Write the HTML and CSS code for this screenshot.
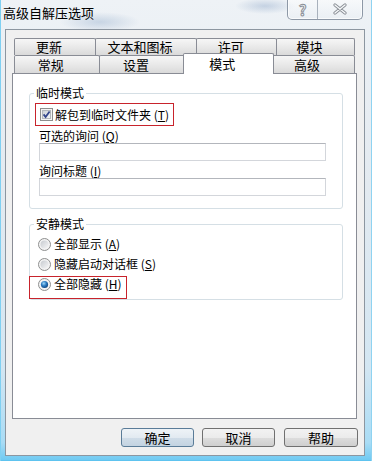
FILE: index.html
```html
<!DOCTYPE html>
<html>
<head>
  <meta charset="utf-8">
  <link rel="stylesheet" href="styles.css">
</head>
<body>
  <div class="window">
    <div class="titlebar">
      <span class="title">高级自解压选项</span>
      <div class="caption-btns">
        <span class="cap-btn cap-help">?</span>
        <span class="cap-btn cap-close">
          <svg width="16" height="12" viewBox="0 0 16 12">
            <path d="M3 2 L13 10 M13 2 L3 10" stroke="#8a8f96" stroke-width="3.2" stroke-linecap="round"/>
            <path d="M3 2 L13 10 M13 2 L3 10" stroke="#f7f9fb" stroke-width="1.4" stroke-linecap="round"/>
          </svg>
        </span>
      </div>
    </div>

    <div class="client">
      <div class="tabs">
        <div class="tab-row">
          <div class="tab tab-update">更新</div>
          <div class="tab tab-text">文本和图标</div>
          <div class="tab tab-license">许可</div>
          <div class="tab tab-module">模块</div>
        </div>
        <div class="tab-row">
          <div class="tab tab-general">常规</div>
          <div class="tab tab-setup">设置</div>
          <div class="tab tab-mode active">模式</div>
          <div class="tab tab-advanced">高级</div>
        </div>
      </div>

      <div class="panel">
        <fieldset class="group group-temp">
          <legend>临时模式</legend>
          <div class="check-row">
            <svg class="check" width="13" height="13" viewBox="0 0 13 13">
              <defs>
                <linearGradient id="chkfill" x1="0" y1="0" x2="1" y2="1">
                  <stop offset="0" stop-color="#cbcfd5"/>
                  <stop offset="1" stop-color="#f6f7f8"/>
                </linearGradient>
              </defs>
              <rect x="0.5" y="0.5" width="12" height="12" fill="#f4f4f4" stroke="#8e8f8f"/>
              <rect x="2.5" y="2.5" width="8" height="8" fill="url(#chkfill)" stroke="#b4b8bd"/>
              <path d="M3.6 6.4 L5.6 9 L9.6 3.4" fill="none" stroke="#34468c" stroke-width="1.8"/>
            </svg>
            <span>解包到临时文件夹 (<u>T</u>)</span>
          </div>
          <div class="field-label">可选的询问 (<u>Q</u>)</div>
          <input class="text-input" type="text">
          <div class="field-label">询问标题 (<u>I</u>)</div>
          <input class="text-input" type="text">
        </fieldset>

        <fieldset class="group group-silent">
          <legend>安静模式</legend>
          <div class="radio-row first">
            <svg class="radio" width="13" height="13" viewBox="0 0 13 13">
              <defs>
                <linearGradient id="rfill1" x1="0" y1="0" x2="1" y2="1">
                  <stop offset="0" stop-color="#c6cacf"/>
                  <stop offset="1" stop-color="#f7f7f7"/>
                </linearGradient>
              </defs>
              <circle cx="6.5" cy="6.5" r="6" fill="#f3f3f3" stroke="#8e8f8f"/>
              <circle cx="6.5" cy="6.5" r="4" fill="url(#rfill1)"/>
            </svg>
            <span>全部显示 (<u>A</u>)</span>
          </div>
          <div class="radio-row">
            <svg class="radio" width="13" height="13" viewBox="0 0 13 13">
              <defs>
                <linearGradient id="rfill2" x1="0" y1="0" x2="1" y2="1">
                  <stop offset="0" stop-color="#c6cacf"/>
                  <stop offset="1" stop-color="#f7f7f7"/>
                </linearGradient>
              </defs>
              <circle cx="6.5" cy="6.5" r="6" fill="#f3f3f3" stroke="#8e8f8f"/>
              <circle cx="6.5" cy="6.5" r="4" fill="url(#rfill2)"/>
            </svg>
            <span>隐藏启动对话框 (<u>S</u>)</span>
          </div>
          <div class="radio-row selected">
            <svg class="radio" width="13" height="13" viewBox="0 0 13 13">
              <defs>
                <radialGradient id="rdot" cx="0.4" cy="0.35" r="0.7">
                  <stop offset="0" stop-color="#9fd8f8"/>
                  <stop offset="0.5" stop-color="#2a79c0"/>
                  <stop offset="1" stop-color="#0c3f78"/>
                </radialGradient>
              </defs>
              <circle cx="6.5" cy="6.5" r="6" fill="#f3f3f3" stroke="#8e8f8f"/>
              <circle cx="6.5" cy="6.5" r="3.6" fill="url(#rdot)"/>
            </svg>
            <span>全部隐藏 (<u>H</u>)</span>
          </div>
        </fieldset>
      </div>

      <div class="buttons">
        <button class="btn btn-default">确定</button>
        <button class="btn">取消</button>
        <button class="btn btn-help">帮助</button>
      </div>
    </div>
  </div>
</body>
</html>
```

FILE: styles.css
```css
/* Окно диалога */
body {
  margin: 0;
  font-family: "Noto Sans CJK SC", "Liberation Sans", sans-serif;
  color: #000;
}

.window {
  width: 372px;
  height: 461px;
  box-sizing: border-box;
  background:
    radial-gradient(ellipse 40px 10px at 100px 22px, rgba(130, 160, 195, 0.35), transparent),
    radial-gradient(ellipse 30px 8px at 265px 6px, rgba(120, 150, 190, 0.35), transparent),
    linear-gradient(#eef2f6 0%, #e3eaf0 40%, #d3e6f2 80%, #a9dcf5 96%, #6cc9f2 100%);
  box-shadow: inset 1px 0 #7fd0f2, inset -1px 0 #8fd3f1, inset 0 -1px #5ec3ef;
}

/* Заголовок */
.titlebar {
  display: flex;
  height: 29px;
}

.titlebar .title {
  margin: 5px 0 0 3px;
  font-size: 13px;
  line-height: 16px;
  color: #000;
}

.caption-btns {
  display: flex;
  margin: -1px 9px 0 auto;
  height: 20px;
  border: 1px solid #8d98a6;
  border-top: none;
  border-radius: 0 0 5px 5px;
  background: linear-gradient(rgba(255, 255, 255, 0.55), rgba(230, 236, 242, 0.4));
  box-shadow: inset 0 0 0 1px rgba(255, 255, 255, 0.7);
}

.cap-btn {
  display: flex;
  align-items: center;
  justify-content: center;
}

.cap-help {
  width: 29px;
  border-right: 1px solid #a8b1bc;
  font-size: 15px;
  font-weight: bold;
  color: #f4f6f8;
  -webkit-text-stroke: 1px #8a8f96;
}

.cap-close {
  width: 44px;
}

/* Клиентская область */
.client {
  width: 360px;
  height: 427px;
  margin-left: 5px;
  box-sizing: border-box;
  padding: 8px 7px 8px 6px;
  background-color: #f0f0f0;
  border: 1px solid #8c96a0;
}

/* Вкладки */
.tabs {
  margin-left: 2px;
  width: 341px;
}

.tab-row {
  display: flex;
  align-items: flex-start;
}

.tab {
  box-sizing: border-box;
  height: 18px;
  padding-right: 12px;
  border: 1px solid #898c95;
  border-bottom: none;
  border-radius: 2px 2px 0 0;
  background: linear-gradient(#f6f6f6, #e9e9e9 50%, #dadada);
  font-size: 13px;
  line-height: 17px;
  text-align: center;
}

.tab + .tab {
  margin-left: -1px;
}

.tab-row:first-child .tab {
  height: 17px;
  line-height: 16px;
}

.tab-update { width: 82px; }
.tab-text { width: 103px; }
.tab-license { width: 81px; }
.tab-module { width: 79px; }

.tab-general { width: 86px; }
.tab-setup { width: 87px; }
.tab-advanced { width: 84px; }

.tab-mode.active {
  position: relative;
  z-index: 1;
  width: 92px;
  height: 21px;
  margin: -2px -2px -1px -3px;
  padding-top: 2px;
  background: #fff;
  line-height: 15px;
}

.tab-mode.active + .tab {
  margin-left: -1px;
}

/* Панель содержимого */
.panel {
  height: 346px;
  box-sizing: border-box;
  padding-top: 12px;
  border: 1px solid #898c95;
  background-color: #fff;
}

.group {
  margin: 0 13px 0 16px;
  padding: 0 0 12px 0;
  min-width: 0;
  border: 1px solid #d5dfe5;
  border-radius: 3px;
}

.group legend {
  margin-left: 4px;
  padding: 0 2px;
  font-size: 12px;
  line-height: 14px;
}

.group-silent {
  margin-top: 8px;
  padding-bottom: 0;
}

/* Красная рамка-выделение */
.check-row {
  display: flex;
  align-items: center;
  gap: 2px;
  width: 139px;
  height: 23px;
  box-sizing: border-box;
  margin: 3px 0 0 5px;
  padding-left: 4px;
  border: 1px solid #c8232c;
  font-size: 12px;
  line-height: 14px;
}

.check,
.radio {
  display: block;
  flex: none;
}

.field-label {
  margin: 3px 0 0 9px;
  font-size: 12px;
  line-height: 14px;
}

.text-input {
  display: block;
  width: 287px;
  height: 18px;
  margin-left: 9px;
  padding: 0;
  box-sizing: border-box;
  border: 1px solid #d3d6db;
  border-top-color: #b3b6bc;
  background-color: #fff;
}

.radio-row {
  display: flex;
  align-items: center;
  gap: 3px;
  height: 20px;
  margin-left: 8px;
  font-size: 12px;
  line-height: 14px;
}

.radio-row.first {
  margin-top: 3px;
}

.radio-row.selected {
  align-items: flex-start;
  width: 98px;
  height: 23px;
  box-sizing: border-box;
  margin: 2px 0 0 -1px;
  padding: 0 0 0 8px;
  border: 1px solid #c8232c;
}

.radio-row.selected .radio {
  margin-top: 1px;
}

/* Кнопки */
.buttons {
  display: flex;
  justify-content: flex-end;
  gap: 8px;
  margin: 9px -1px 0 0;
}

.btn {
  width: 73px;
  height: 19px;
  padding: 0;
  box-sizing: border-box;
  border: 1px solid #707070;
  border-radius: 3px;
  background: linear-gradient(#f2f2f2 0%, #ebebeb 50%, #dddddd 50%, #cfcfcf 100%);
  font-family: inherit;
  font-size: 13px;
  line-height: 17px;
  color: #000;
}

.btn-default {
  border-color: #5a7c98;
  background: linear-gradient(#eef3f7 0%, #e2eaf1 50%, #d0dde8 50%, #c3d3e1 100%);
}

.btn-help {
  width: 74px;
  margin-left: 1px;
}
```
